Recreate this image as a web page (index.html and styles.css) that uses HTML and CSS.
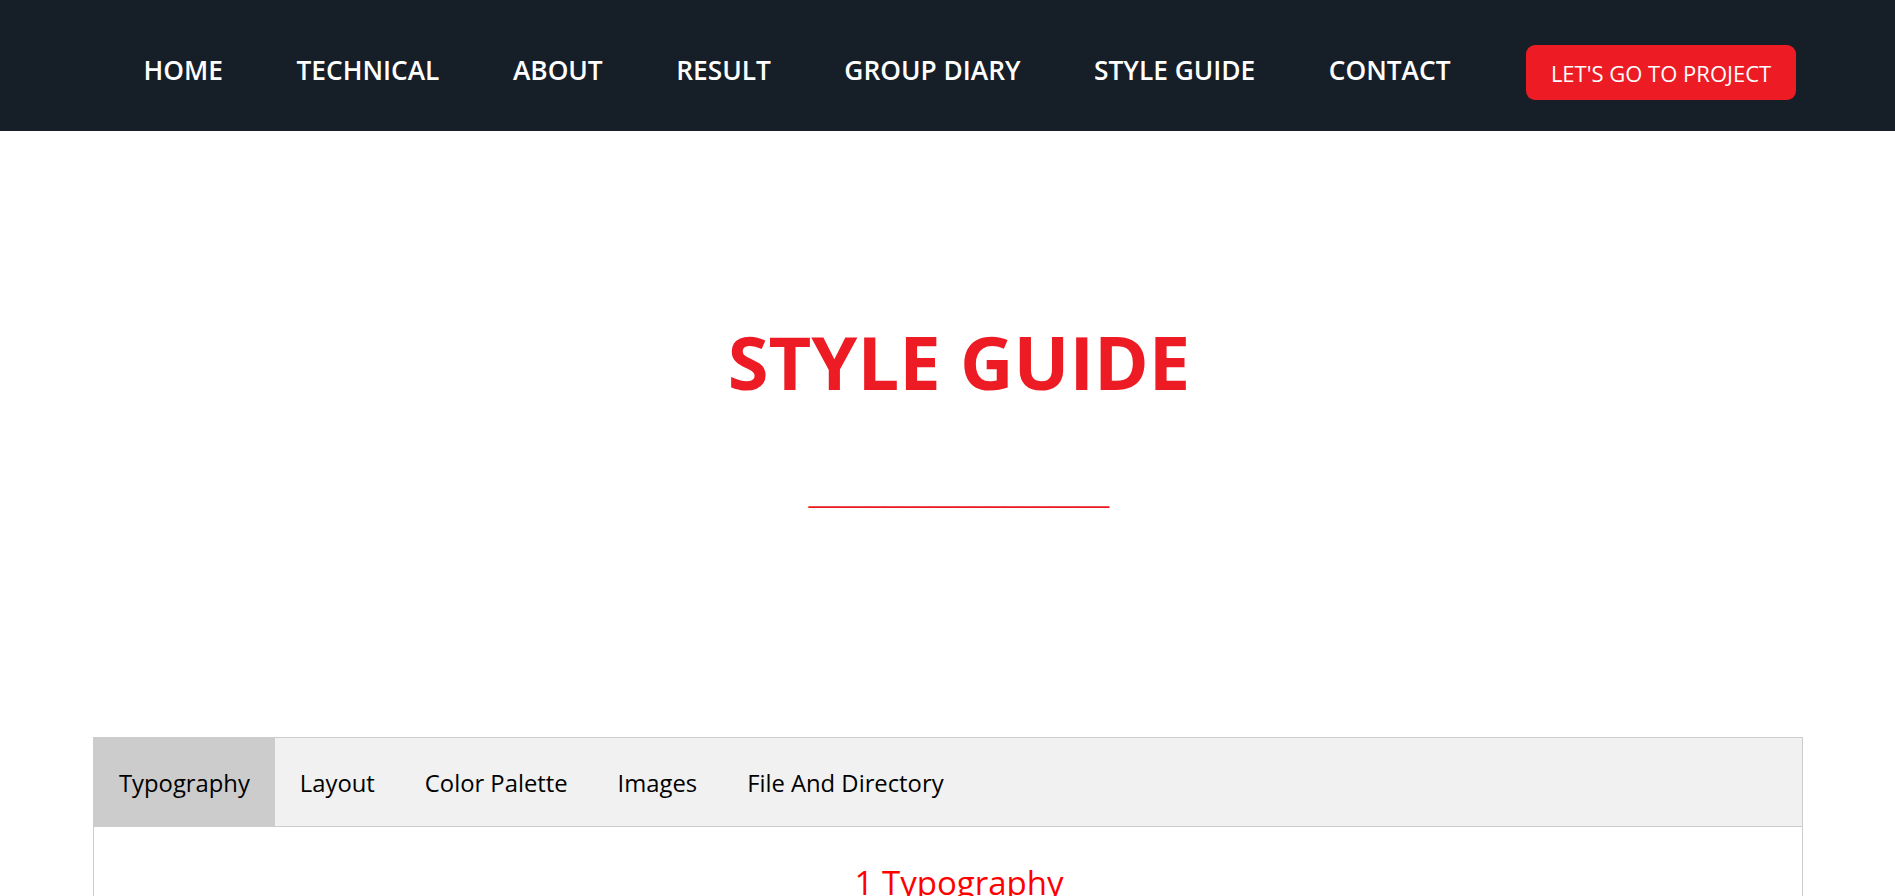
FILE: index.html
```html
<!DOCTYPE html>
<html lang="en">
<head>
<meta charset="utf-8">
<title>Style Guide</title>
<link rel="stylesheet" href="styles.css">
</head>
<body>
<header class="topbar">
  <nav class="menu">
    <a class="menu-link" href="#">HOME</a>
    <a class="menu-link" href="#">TECHNICAL</a>
    <a class="menu-link" href="#">ABOUT</a>
    <a class="menu-link" href="#">RESULT</a>
    <a class="menu-link" href="#">GROUP DIARY</a>
    <a class="menu-link" href="#">STYLE GUIDE</a>
    <a class="menu-link" href="#">CONTACT</a>
    <a class="cta" href="#">LET'S GO TO PROJECT</a>
  </nav>
</header>

<section class="hero">
  <h1 class="hero-title">STYLE GUIDE</h1>
  <p class="hero-rule">____________________</p>
</section>

<section class="guide">
  <div class="tabs">
    <button class="tab active">Typography</button>
    <button class="tab">Layout</button>
    <button class="tab">Color Palette</button>
    <button class="tab">Images</button>
    <button class="tab">File And Directory</button>
  </div>
  <div class="panel">
    <h2 class="panel-title">1 Typography</h2>
  </div>
</section>
</body>
</html>
```
FILE: styles.css
```css
* {
  box-sizing: border-box;
}

html, body {
  margin: 0;
  padding: 0;
}

body {
  font-family: "Open Sans", "Noto Sans", sans-serif;
  background: #ffffff;
  color: #000000;
  overflow: hidden;
}

.topbar {
  height: 131px;
  background: #161e28;
  padding-top: 14px;
}

.menu {
  height: 100%;
  display: flex;
  align-items: center;
  justify-content: flex-end;
  gap: 73.5px;
  padding-right: 99px;
}

.menu-link {
  color: #ffffff;
  text-decoration: none;
  font-size: 26.3px;
  font-weight: 600;
  line-height: 34px;
  padding-bottom: 6px;
}

.menu-link:nth-last-child(2) {
  margin-right: 2px;
}

.cta {
  display: flex;
  align-items: center;
  justify-content: center;
  width: 270px;
  height: 55px;
  background: #ed1c24;
  color: #ffffff;
  text-decoration: none;
  font-size: 22px;
  font-weight: 400;
  border-radius: 9px;
}

.hero {
  padding: 194px 0 0 23px;
  text-align: center;
}

.hero-title {
  margin: 0;
  font-size: 74px;
  line-height: 74px;
  font-weight: 700;
  color: #ed1c24;
}

.hero-rule {
  margin: 81px 0 0;
  font-family: "Liberation Sans", sans-serif;
  font-size: 27px;
  line-height: 27px;
  color: #ed1c24;
}

.guide {
  margin: 230px 92px 0 93px;
}

.tabs {
  display: flex;
  background: #f1f1f1;
  border: 1px solid #cccccc;
}

.tab {
  font-family: "Open Sans", "Noto Sans", sans-serif;
  font-size: 23.8px;
  line-height: 32px;
  padding: 29px 25px 27px;
  border: none;
  background: transparent;
  color: #000000;
}

.tab.active {
  background: #cccccc;
}

.panel {
  border: 1px solid #cccccc;
  border-top: none;
  padding: 36px 0 0 22px;
  height: 200px;
}

.panel-title {
  margin: 0;
  text-align: center;
  font-size: 33px;
  line-height: 1.2;
  font-weight: 400;
  color: #ff0000;
}
```
